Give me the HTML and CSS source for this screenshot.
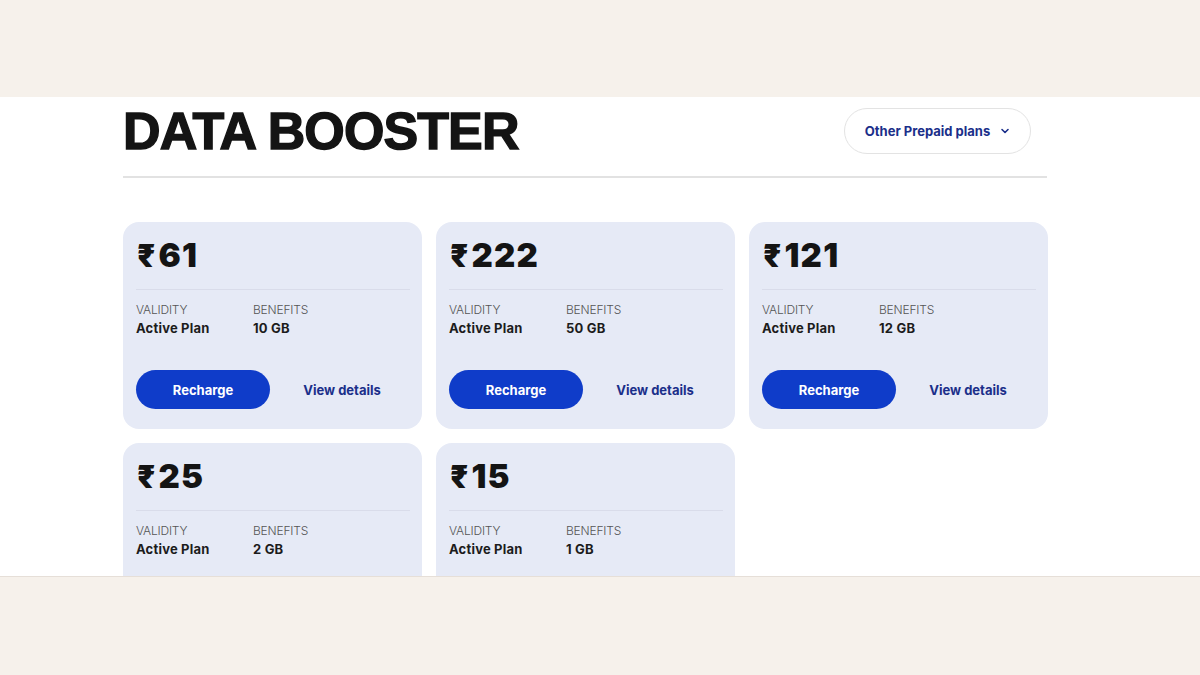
FILE: index.html
```html
<!DOCTYPE html>
<html>
<head>
<meta charset="utf-8">
<link rel="stylesheet" href="styles.css">
</head>
<body>
<div class="band top"></div>
<main class="main">
  <div class="wrap">
    <div class="head">
      <h1 class="title">DATA BOOSTER</h1>
      <button class="dropdown">Other Prepaid plans
        <svg width="10" height="10" viewBox="0 0 10 10"><path d="M2 3.5 L5 6.5 L8 3.5" fill="none" stroke="#1b2f8a" stroke-width="1.6" stroke-linecap="round" stroke-linejoin="round"/></svg>
      </button>
    </div>
    <div class="rule"></div>
    <div class="grid">
      <div class="card">
        <div class="price"><span class="cur">₹</span>61</div>
        <div class="info">
          <div class="col"><div class="lbl">VALIDITY</div><div class="val">Active Plan</div></div>
          <div class="col"><div class="lbl">BENEFITS</div><div class="val">10 GB</div></div>
        </div>
        <div class="actions"><button class="btn">Recharge</button><a class="link">View details</a></div>
      </div>
      <div class="card">
        <div class="price"><span class="cur">₹</span>222</div>
        <div class="info">
          <div class="col"><div class="lbl">VALIDITY</div><div class="val">Active Plan</div></div>
          <div class="col"><div class="lbl">BENEFITS</div><div class="val">50 GB</div></div>
        </div>
        <div class="actions"><button class="btn">Recharge</button><a class="link">View details</a></div>
      </div>
      <div class="card">
        <div class="price"><span class="cur">₹</span>121</div>
        <div class="info">
          <div class="col"><div class="lbl">VALIDITY</div><div class="val">Active Plan</div></div>
          <div class="col"><div class="lbl">BENEFITS</div><div class="val">12 GB</div></div>
        </div>
        <div class="actions"><button class="btn">Recharge</button><a class="link">View details</a></div>
      </div>
      <div class="card">
        <div class="price"><span class="cur">₹</span>25</div>
        <div class="info">
          <div class="col"><div class="lbl">VALIDITY</div><div class="val">Active Plan</div></div>
          <div class="col"><div class="lbl">BENEFITS</div><div class="val">2 GB</div></div>
        </div>
      </div>
      <div class="card">
        <div class="price"><span class="cur">₹</span>15</div>
        <div class="info">
          <div class="col"><div class="lbl">VALIDITY</div><div class="val">Active Plan</div></div>
          <div class="col"><div class="lbl">BENEFITS</div><div class="val">1 GB</div></div>
        </div>
      </div>
    </div>
  </div>
</main>
<div class="band bottom"></div>
</body>
</html>
```
FILE: styles.css
```css
* { box-sizing: border-box; }
html, body { margin: 0; padding: 0; }
body {
  width: 1200px;
  height: 675px;
  overflow: hidden;
  background: #f6f1eb;
  font-family: Inter, "Noto Sans", sans-serif;
  color: #141414;
}
.band { background: #f6f1eb; }
.band.top { height: 97px; }
.band.bottom { height: 99px; border-top: 1px solid #e6dfd8; }
.main {
  height: 479px;
  background: #fff;
  overflow: hidden;
}
.wrap {
  width: 924px;
  margin-left: 123px;
  padding-top: 11px;
}
.head {
  display: flex;
  justify-content: space-between;
  align-items: center;
  height: 46px;
}
.title {
  margin: 0;
  font-family: "Liberation Sans", Arial, sans-serif;
  font-weight: 900;
  font-size: 52px;
  letter-spacing: -0.9px;
  line-height: 1;
  color: #141414;
  -webkit-text-stroke: 1.4px #141414;
}
.dropdown {
  width: 187px;
  height: 46px;
  margin-right: 16px;
  border: 1px solid #e3e3e3;
  border-radius: 23px;
  background: #fff;
  font-family: Inter, "Noto Sans", sans-serif;
  font-weight: 700;
  font-size: 13px;
  color: #1b2f8a;
  display: flex;
  align-items: center;
  justify-content: center;
  gap: 10px;
  padding: 0;
}
.rule {
  margin-top: 22px;
  height: 2px;
  background: #e2e2e2;
}
.grid {
  margin-top: 44px;
  display: grid;
  grid-template-columns: repeat(3, 299px);
  column-gap: 14px;
  row-gap: 14px;
}
.card {
  background: #e6eaf6;
  border-radius: 16px;
  padding: 14px 12px 19px 13px;
  height: 207px;
}
.price {
  font-family: Inter, "Noto Sans", sans-serif;
  font-weight: 900;
  font-size: 33px;
  line-height: 39px;
  padding-left: 1px;
  letter-spacing: 1.2px;
}
.cur {
  font-size: 31px;
  margin-right: 3px;
  letter-spacing: 0;
}
.info {
  margin-top: 14px;
  border-top: 1px solid #d9dcea;
  padding-top: 12px;
  display: flex;
}
.col { width: 117px; }
.lbl {
  font-size: 12px;
  font-weight: 300;
  color: #555;
  line-height: 15px;
  letter-spacing: -0.2px;
}
.val {
  margin-top: 3px;
  font-size: 13px;
  font-weight: 700;
  line-height: 16px;
  letter-spacing: 0.2px;
  color: #1c1c1c;
}
.actions {
  margin-top: 34px;
  display: flex;
  align-items: center;
}
.btn {
  width: 134px;
  height: 39px;
  border: none;
  border-radius: 20px;
  background: #0f3cc9;
  color: #fff;
  font-family: Inter, "Noto Sans", sans-serif;
  font-weight: 700;
  font-size: 13px;
  padding: 0;
}
.link {
  flex: 1;
  text-align: center;
  font-weight: 700;
  font-size: 13px;
  color: #1b2f8a;
  padding-left: 4px;
}
```
